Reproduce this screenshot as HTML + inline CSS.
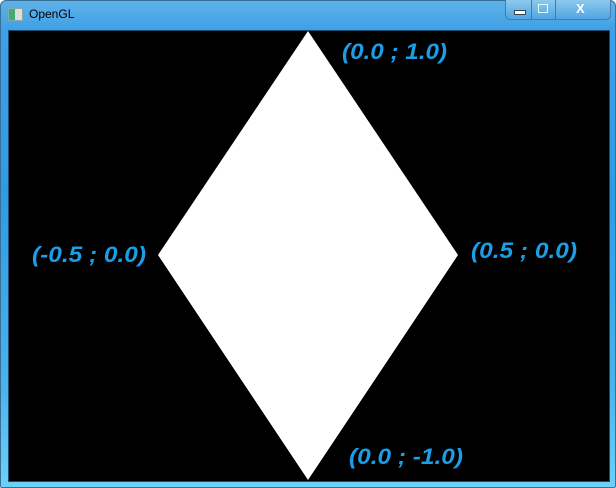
<!DOCTYPE html>
<html><head><style>
body{margin:0;width:616px;height:488px;overflow:hidden;background:#fff}
.win{position:absolute;left:0;top:0;width:614px;height:486px;border:1px solid #3a6f97;border-radius:6px 6px 2px 2px;background:linear-gradient(180deg,#5fb2ea 0%,#3ea0e6 6%,#2f9be4 40%,#4ab4ec 80%,#6fd0f6 100%)}
.title{position:absolute;left:29px;top:7px;font:12px "Liberation Sans",sans-serif;color:#000}
.icon{position:absolute;left:8px;top:8px;width:13px;height:11px;border:1px solid #8aa;background:linear-gradient(90deg,#4a7 0 45%,#ddd 45%)}
.btns{position:absolute;left:505px;top:0;width:104px;height:19px;border:1px solid #4a78a0;border-top:none;border-radius:0 0 5px 5px;background:linear-gradient(#8ec8ee,#4ea6e2)}
.client{position:absolute;left:8px;top:30px;width:600px;height:450px;background:#000;border:1px solid #1d4d70}
</style></head><body>
<div class="win"></div>
<div class="icon"></div>
<div class="title">OpenGL</div>
<div class="btns">
 <div style="position:absolute;left:25px;top:0;width:1px;height:19px;background:#4a78a0"></div>
 <div style="position:absolute;left:49px;top:0;width:1px;height:19px;background:#4a78a0"></div>
 <div style="position:absolute;left:8px;top:10px;width:10px;height:3px;background:#fff;border:1px solid #345"></div>
 <div style="position:absolute;left:32px;top:4px;width:8px;height:7px;border:1px solid #dff"></div>
 <div style="position:absolute;left:70px;top:1px;font:bold 13px 'Liberation Sans',sans-serif;color:#fff">X</div>
</div>
<div class="client"></div>
<svg style="position:absolute;left:0;top:0" width="616" height="488">
<polygon points="308,31 458,255 308,480 158,255" fill="#fff"/>
<g font-family="Liberation Sans,sans-serif" font-weight="bold" font-style="italic" font-size="22" fill="#1a9ee8">
<text x="342" y="59" textLength="105" lengthAdjust="spacingAndGlyphs">(0.0 ; 1.0)</text>
<text x="32" y="262" textLength="114" lengthAdjust="spacingAndGlyphs">(-0.5 ; 0.0)</text>
<text x="471" y="258" textLength="106" lengthAdjust="spacingAndGlyphs">(0.5 ; 0.0)</text>
<text x="349" y="464" textLength="114" lengthAdjust="spacingAndGlyphs">(0.0 ; -1.0)</text>
</g>
</svg>
</body></html>
